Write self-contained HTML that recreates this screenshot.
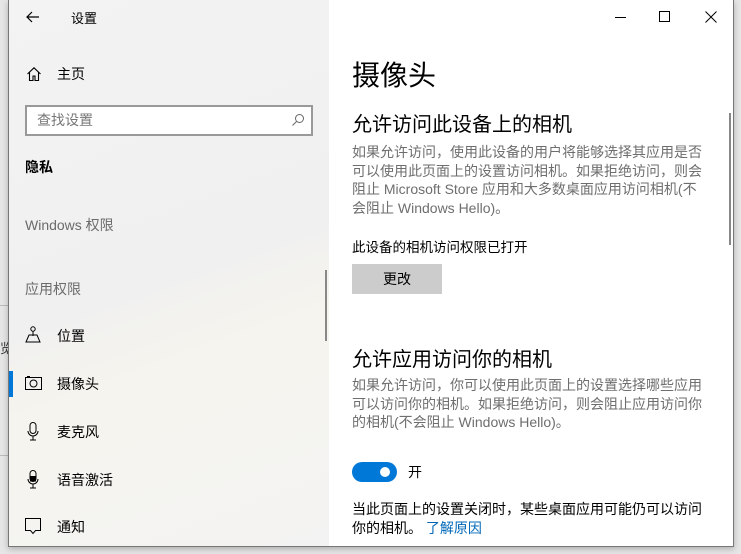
<!DOCTYPE html>
<html><head><meta charset="utf-8"><style>
*{margin:0;padding:0;box-sizing:border-box}
body{width:741px;height:554px;overflow:hidden;background:#e6e6e6;font-family:"Liberation Sans","Noto Sans CJK SC",sans-serif;position:relative}
.a{position:absolute;white-space:nowrap}
#win{position:absolute;left:8px;top:0;width:726px;height:547px;background:#fff;border:1px solid #777;border-top:none;box-shadow:0 2px 6px rgba(0,0,0,.25)}
#left{position:absolute;left:0;top:0;width:320px;height:546px;background:linear-gradient(160deg,#f3f3f3 0%,#f0f0f0 50%,#f6f4ee 65%,#f3f3f3 100%)}
.nav{font-size:14px;color:#000}
.g{color:#6b6b6b}
.body{font-size:14px;color:#6e6e6e;line-height:18.7px;width:352px;white-space:normal}
</style></head><body>
<div class="a" style="left:0;top:338px;font-size:13px;color:#333">览</div>
<div class="a" style="left:0;top:305px;width:8px;height:1px;background:#bbb"></div>
<div class="a" style="left:0;top:455px;width:8px;height:1px;background:#bbb"></div>
<div id="win">
<div id="left">
<svg class="a" style="left:17px;top:10px" width="14" height="14" viewBox="0 0 14 14"><path d="M13 7H1M6 2L1 7l5 5" fill="none" stroke="#000" stroke-width="1.2"/></svg>
<div class="a" style="left:62px;top:8px;font-size:13px">设置</div>
<svg class="a" style="left:17px;top:66px" width="16" height="16" viewBox="0 0 16 16"><path d="M1.5 8L8 1.8 14.5 8M3.5 6.2V14.5h3.5V10h2v4.5h3.5V6.2" fill="none" stroke="#000" stroke-width="1.1"/></svg>
<div class="a nav" style="left:48px;top:64px">主页</div>
<div class="a" style="left:16px;top:105px;width:288px;height:31px;border:2px solid #999;background:#fff"></div>
<div class="a" style="left:28px;top:110px;font-size:14px;color:#777">查找设置</div>
<svg class="a" style="left:282px;top:113px" width="14" height="14" viewBox="0 0 14 14"><circle cx="8.5" cy="5.5" r="4" fill="none" stroke="#666" stroke-width="1"/><path d="M5.5 8.5L1.5 12.5" stroke="#666" stroke-width="1"/></svg>
<div class="a" style="left:16px;top:157px;font-size:14px;font-weight:bold">隐私</div>
<div class="a g" style="left:16px;top:215px;font-size:14px">Windows 权限</div>
<div class="a g" style="left:16px;top:279px;font-size:14px">应用权限</div>
<div class="a" style="left:316px;top:270px;width:2px;height:71px;background:#888"></div>
<svg class="a" style="left:16px;top:326px" width="16" height="18" viewBox="0 0 16 18"><circle cx="8" cy="3" r="2.2" fill="none" stroke="#000" stroke-width="1"/><path d="M8 5.2V10M1 16L4 9h8l3 7z" fill="none" stroke="#000" stroke-width="1"/></svg>
<div class="a nav" style="left:48px;top:326px">位置</div>
<div class="a" style="left:0;top:371px;width:4px;height:26px;background:#0078d7"></div>
<svg class="a" style="left:16px;top:376px" width="17" height="14" viewBox="0 0 17 14"><rect x="0.5" y="1.5" width="16" height="12" fill="none" stroke="#000" stroke-width="1"/><circle cx="8.5" cy="7.5" r="3.5" fill="none" stroke="#000" stroke-width="1"/><path d="M2 0.5h3" stroke="#000"/></svg>
<div class="a nav" style="left:48px;top:374px">摄像头</div>
<svg class="a" style="left:18px;top:422px" width="12" height="19" viewBox="0 0 12 19"><rect x="3" y="0.5" width="6" height="11" rx="3" fill="none" stroke="#000" stroke-width="1"/><path d="M1 9a5 5 0 0 0 10 0M6 14v4M3 18h6" fill="none" stroke="#000" stroke-width="1"/></svg>
<div class="a nav" style="left:48px;top:422px">麦克风</div>
<svg class="a" style="left:18px;top:470px" width="12" height="19" viewBox="0 0 12 19"><rect x="3" y="0.5" width="6" height="11" rx="3" fill="none" stroke="#000" stroke-width="1"/><rect x="3" y="6" width="6" height="5.5" fill="#000"/><path d="M1 9a5 5 0 0 0 10 0M6 14v4M3 18h6" fill="none" stroke="#000" stroke-width="1"/></svg>
<div class="a nav" style="left:48px;top:470px">语音激活</div>
<svg class="a" style="left:16px;top:518px" width="17" height="17" viewBox="0 0 17 17"><path d="M0.5 0.5h15v12h-5l-2.5 3-2.5-3h-5z" fill="none" stroke="#000" stroke-width="1"/></svg>
<div class="a nav" style="left:48px;top:517px">通知</div>
</div>
<div class="a" style="left:606px;top:17px;width:11px;height:1px;background:#000"></div>
<div class="a" style="left:650px;top:11px;width:11px;height:11px;border:1px solid #000"></div>
<svg class="a" style="left:696px;top:11px" width="12" height="12" viewBox="0 0 12 12"><path d="M0.5 0.5l11 11M11.5 0.5l-11 11" stroke="#000" stroke-width="1"/></svg>
<div class="a" style="left:720px;top:113px;width:2px;height:132px;background:#888"></div>
<div class="a" style="left:343px;top:54px;font-size:28px">摄像头</div>
<div class="a" style="left:343px;top:108px;font-size:20px">允许访问此设备上的相机</div>
<div class="a body" style="left:343px;top:143px">如果允许访问，使用此设备的用户将能够选择其应用是否可以使用此页面上的设置访问相机。如果拒绝访问，则会阻止 Microsoft Store 应用和大多数桌面应用访问相机(不会阻止 Windows Hello)。</div>
<div class="a" style="left:343px;top:236px;font-size:13.5px">此设备的相机访问权限已打开</div>
<div class="a" style="left:343px;top:264px;width:90px;height:30px;background:#ccc;font-size:14px;text-align:center;line-height:30px">更改</div>
<div class="a" style="left:343px;top:343px;font-size:20px">允许应用访问你的相机</div>
<div class="a body" style="left:343px;top:376px">如果允许访问，你可以使用此页面上的设置选择哪些应用可以访问你的相机。如果拒绝访问，则会阻止应用访问你的相机(不会阻止 Windows Hello)。</div>
<div class="a" style="left:343px;top:462px;width:45px;height:20px;border-radius:10px;background:#0078d7"></div>
<div class="a" style="left:371px;top:467px;width:10px;height:10px;border-radius:5px;background:#fff"></div>
<div class="a" style="left:399px;top:462px;font-size:14px">开</div>
<div class="a body" style="left:343px;top:500px;color:#000">当此页面上的设置关闭时，某些桌面应用可能仍可以访问你的相机。 <span style="color:#0067b8">了解原因</span></div>
</div>
</body></html>
